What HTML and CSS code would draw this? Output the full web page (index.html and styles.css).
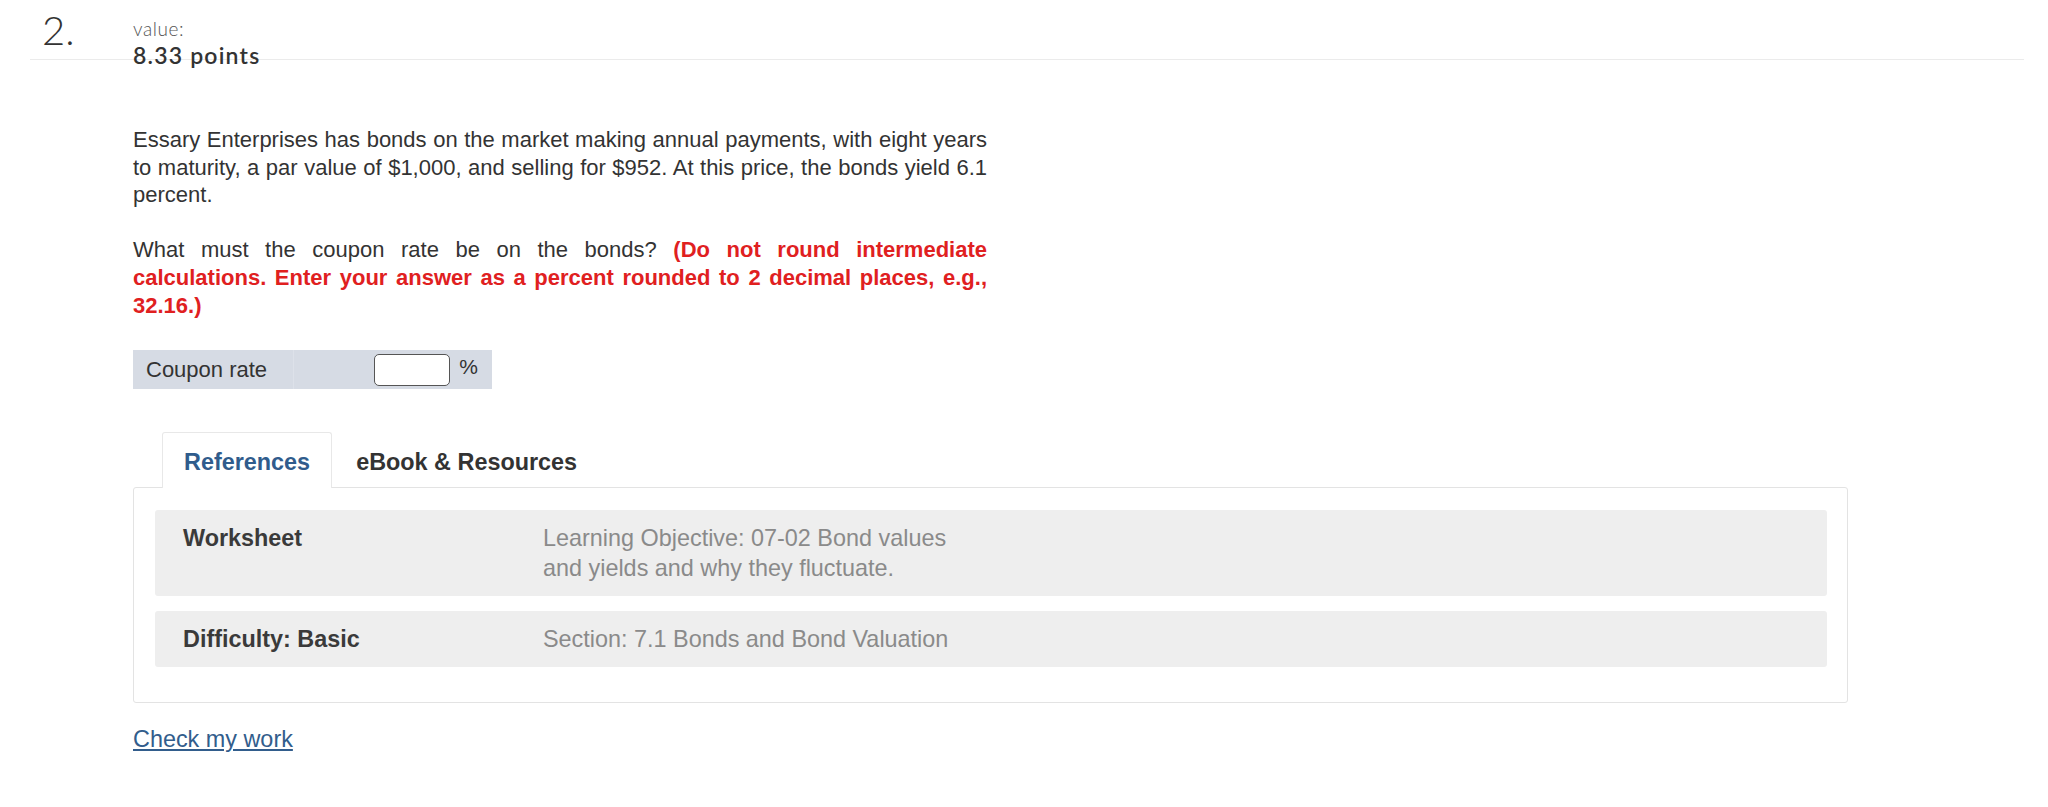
FILE: index.html
```html
<!DOCTYPE html>
<html lang="en">
<head>
<meta charset="utf-8">
<title>Question 2</title>
<link rel="stylesheet" href="styles.css">
</head>
<body>
<div class="question">
  <div class="q-header">
    <div class="q-num">2.</div>
    <div class="q-value">
      <div class="q-value-label">value:</div>
      <div class="q-points">8.33 points</div>
    </div>
  </div>

  <div class="q-body">
    <p class="prompt">Essary Enterprises has bonds on the market making annual payments, with eight years to maturity, a par value of $1,000, and selling for $952. At this price, the bonds yield 6.1 percent.</p>
    <p class="prompt">What must the coupon rate be on the bonds? <strong class="instr">(Do not round intermediate calculations. Enter your answer as a percent rounded to 2 decimal places, e.g., 32.16.)</strong></p>

    <div class="answer-row">
      <div class="answer-label">Coupon rate</div>
      <div class="answer-cell">
        <input class="answer-input" type="text" aria-label="Coupon rate">
        <span class="answer-unit">%</span>
      </div>
    </div>

    <div class="tabs">
      <div class="tab tab-active">References</div>
      <div class="tab">eBook &amp; Resources</div>
    </div>
    <div class="panel">
      <div class="ref-row">
        <div class="ref-key">Worksheet</div>
        <div class="ref-val">Learning Objective: 07-02 Bond values and yields and why they fluctuate.</div>
      </div>
      <div class="ref-row">
        <div class="ref-key">Difficulty: Basic</div>
        <div class="ref-val">Section: 7.1 Bonds and Bond Valuation</div>
      </div>
    </div>

    <a class="check-link" href="#">Check my work</a>
  </div>
</div>
</body>
</html>
```

FILE: styles.css
```css
html, body {
  margin: 0;
  padding: 0;
  background: #ffffff;
}

body {
  font-family: "Liberation Sans", Arial, sans-serif;
  color: #333333;
}

.question {
  width: 2048px;
}

.q-header {
  display: flex;
  align-items: flex-start;
  height: 59px;
  margin: 0 24px 0 30px;
  border-bottom: 1px solid #ebebeb;
}

.q-num {
  font-family: Lato, "Open Sans", sans-serif;
  font-weight: 300;
  font-size: 40px;
  line-height: 40px;
  color: #333333;
  margin-left: 12px;
  padding-top: 10px;
  width: 91px;
}

.q-value {
  font-family: Lato, "Open Sans", sans-serif;
  padding-top: 18px;
}

.q-value-label {
  font-size: 19px;
  line-height: 22px;
  font-weight: 300;
  letter-spacing: 0.6px;
  color: #555555;
}

.q-points {
  font-size: 23px;
  line-height: 31px;
  font-weight: 600;
  letter-spacing: 1.2px;
  color: #333333;
}

.q-body {
  margin-left: 133px;
  padding-top: 66px;
}

.prompt {
  width: 854px;
  margin: 0 0 27.6px 0;
  font-size: 22px;
  line-height: 27.6px;
  text-align: justify;
  color: #333333;
}

.instr {
  color: #e0201f;
  font-weight: bold;
}

.answer-row {
  display: flex;
  width: 359px;
  height: 39px;
  margin-top: 31px;
  background: #d6dbe4;
}

.answer-label {
  width: 147px;
  padding-left: 13px;
  font-size: 22px;
  line-height: 39px;
  color: #333333;
  border-right: 1px solid #dde1e9;
}

.answer-cell {
  flex: 1;
  display: flex;
  align-items: center;
  justify-content: flex-end;
  padding-right: 14px;
}

.answer-input {
  box-sizing: border-box;
  width: 76px;
  height: 32px;
  margin: 0 9px 0 0;
  border: 1px solid #555555;
  border-radius: 5px;
  background: #ffffff;
  padding: 0;
}

.answer-unit {
  font-size: 21px;
  line-height: 24px;
  color: #333333;
  margin-top: -6px;
}

.tabs {
  display: flex;
  gap: 2px;
  margin-top: 43px;
  margin-left: 29px;
  position: relative;
  z-index: 1;
}

.tab {
  box-sizing: border-box;
  height: 56px;
  padding: 18px 21px 0 21px;
  font-size: 23.4px;
  line-height: 23.4px;
  font-weight: bold;
  color: #333333;
  border: 1px solid transparent;
  border-bottom: none;
}

.tab-active {
  color: #305c8c;
  background: #ffffff;
  border-color: #e8e8e8;
  border-radius: 3px 3px 0 0;
}

.panel {
  box-sizing: border-box;
  width: 1715px;
  margin-top: -1px;
  padding: 22px 20px 35px 21px;
  border: 1px solid #e3e3e3;
  border-radius: 3px;
  display: flex;
  flex-direction: column;
  gap: 15px;
}

.ref-row {
  display: flex;
  padding: 13px 28px;
  background: #eeeeee;
  border-radius: 3px;
  font-size: 23.4px;
  line-height: 30px;
}

.ref-key {
  width: 360px;
  font-weight: bold;
  color: #3a3a3a;
}

.ref-val {
  width: 420px;
  color: #8a8a8a;
}

.check-link {
  display: inline-block;
  margin-top: 21px;
  font-size: 23.4px;
  line-height: 30px;
  color: #325d8c;
  text-decoration: underline;
}
```
